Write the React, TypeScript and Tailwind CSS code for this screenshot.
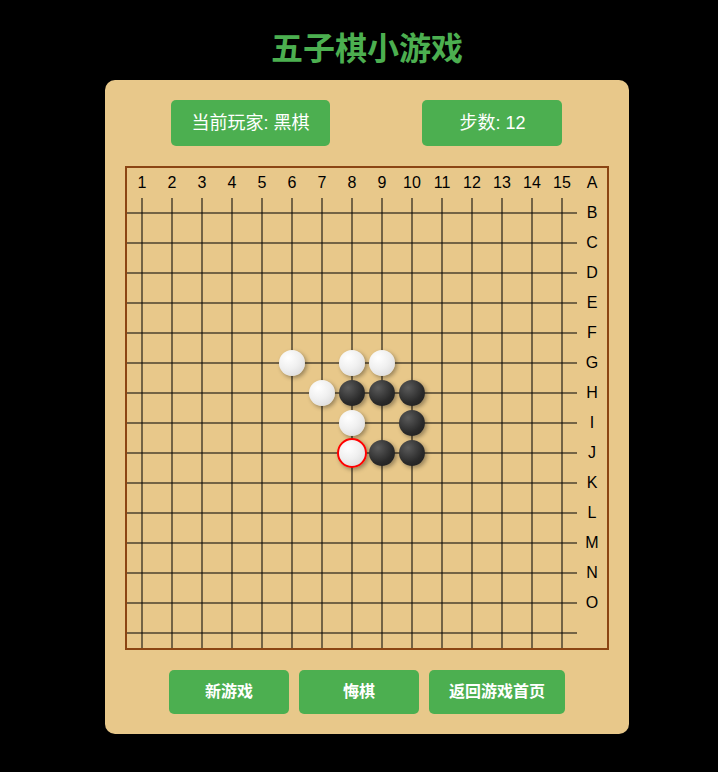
import React from "react";

type StoneColor = "black" | "white";

const LETTERS = "ABCDEFGHIJKLMNO".split("");
const SIZE = 15;

// Stones on the board, keyed "row-col" (0-based intersection indices)
const STONES: Record<string, StoneColor> = {
  "5-5": "white",
  "5-7": "white",
  "5-8": "white",
  "6-6": "white",
  "7-7": "white",
  "8-7": "white",
  "6-7": "black",
  "6-8": "black",
  "6-9": "black",
  "7-9": "black",
  "8-8": "black",
  "8-9": "black",
};
const LAST_MOVE = "8-7";

function Stone({ color, last }: { color: StoneColor; last: boolean }) {
  const fill =
    color === "black"
      ? "bg-[radial-gradient(circle_at_35%_30%,#5a5a5a,#2a2a2a_60%,#1c1c1c)]"
      : "bg-[radial-gradient(circle_at_35%_30%,#ffffff,#f0f0f0_45%,#d4d4d4)]";
  const size = last
    ? "left-0 top-0 h-[30px] w-[30px] border-2 border-[#ff0000]"
    : "left-[2px] top-[2px] h-[26px] w-[26px]";
  return (
    <span
      className={`absolute z-10 rounded-full shadow-[2px_2px_4px_rgba(0,0,0,0.35)] ${fill} ${size}`}
    />
  );
}

function Intersection({ r, c }: { r: number; c: number }) {
  const key = `${r}-${c}`;
  const stone = STONES[key];
  return (
    <div className="relative h-[30px] w-[30px]">
      <span className="absolute left-0 right-0 top-[14px] h-[2px] bg-black/50" />
      <span className="absolute bottom-0 top-0 left-[14px] w-[2px] bg-black/50" />
      {stone && <Stone color={stone} last={key === LAST_MOVE} />}
    </div>
  );
}

function Label({ text }: { text: string }) {
  return (
    <div className="flex h-[30px] w-[30px] items-center justify-center text-[16px] leading-none text-black">
      {text}
    </div>
  );
}

function Board() {
  const cells: React.ReactNode[] = [];
  // header row: column numbers, then the first row letter
  for (let c = 0; c < SIZE; c++) cells.push(<Label key={`n${c}`} text={String(c + 1)} />);
  cells.push(<Label key="l0" text={LETTERS[0]} />);
  for (let r = 0; r < SIZE; r++) {
    for (let c = 0; c < SIZE; c++) cells.push(<Intersection key={`${r}-${c}`} r={r} c={c} />);
    cells.push(<Label key={`l${r + 1}`} text={LETTERS[r + 1] ?? ""} />);
  }
  return (
    <div className="grid grid-cols-[repeat(16,30px)] grid-rows-[repeat(16,30px)] overflow-hidden border-2 border-[#8b4513] bg-[#e8c88a]">
      {cells}
    </div>
  );
}

function InfoBadge({ children }: { children: React.ReactNode }) {
  return (
    <div className="flex h-[46px] min-w-[140px] items-center justify-center rounded-[5px] bg-[#4caf50] px-5 text-[18px] text-white">
      {children}
    </div>
  );
}

function ActionButton({ children }: { children: React.ReactNode }) {
  return (
    <button className="flex h-[44px] min-w-[120px] items-center justify-center rounded-[5px] bg-[#4caf50] px-5 text-[16px] font-bold text-white">
      {children}
    </button>
  );
}

export default function App() {
  return (
    <div
      className="flex min-h-screen flex-col items-center bg-black pl-[16px]"
      style={{ fontFamily: '"Liberation Sans", "Noto Sans CJK SC", sans-serif' }}
    >
      <h1 className="mt-[29px] mb-[11px] text-[32px] leading-[40px] font-bold text-[#4caf50]">
        五子棋小游戏
      </h1>
      <div className="flex flex-col rounded-[10px] bg-[#e8c88a] p-5">
        <div className="flex justify-around">
          <InfoBadge>当前玩家: 黑棋</InfoBadge>
          <InfoBadge>步数: 12</InfoBadge>
        </div>
        <div className="mt-5">
          <Board />
        </div>
        <div className="mt-5 flex justify-center gap-[10px]">
          <ActionButton>新游戏</ActionButton>
          <ActionButton>悔棋</ActionButton>
          <ActionButton>返回游戏首页</ActionButton>
        </div>
      </div>
    </div>
  );
}
